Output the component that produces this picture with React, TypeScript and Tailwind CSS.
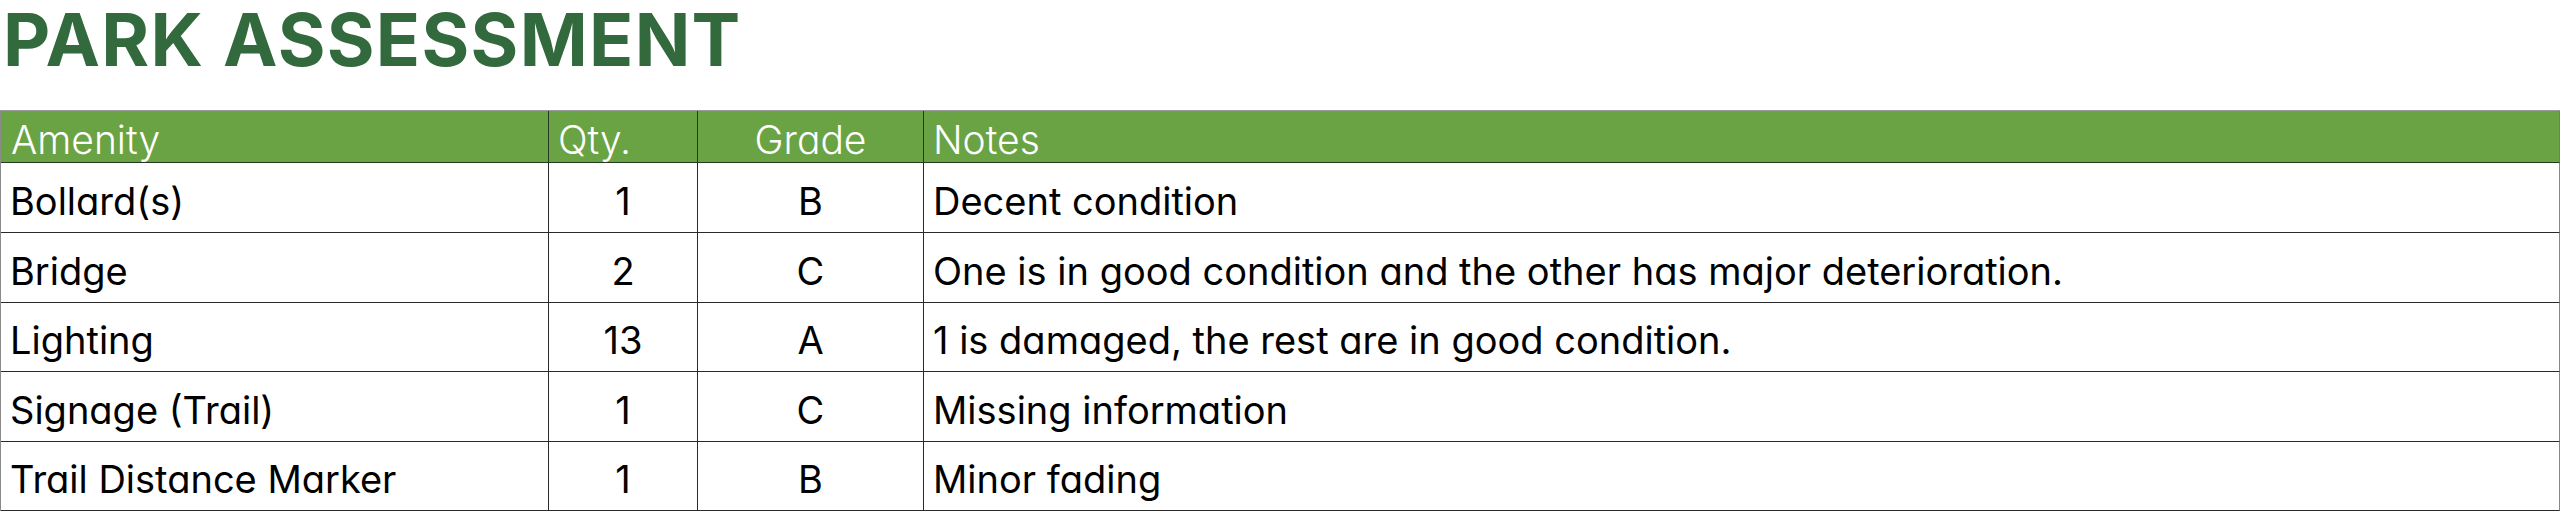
import React from "react";

const rows = [
  { amenity: "Bollard(s)", qty: "1", grade: "B", notes: "Decent condition", h: "h-[70px]" },
  { amenity: "Bridge", qty: "2", grade: "C", notes: "One is in good condition and the other has major deterioration.", h: "h-[70px]" },
  { amenity: "Lighting", qty: "13", grade: "A", notes: "1 is damaged, the rest are in good condition.", h: "h-[69px]" },
  { amenity: "Signage (Trail)", qty: "1", grade: "C", notes: "Missing information", h: "h-[70px]" },
  { amenity: "Trail Distance Marker", qty: "1", grade: "B", notes: "Minor fading", h: "h-[69px]" },
];

const font = "font-['Inter','Liberation_Sans',sans-serif] [font-feature-settings:'cv11']";

export default function App() {
  return (
    <div className={`w-[2560px] h-[511px] overflow-hidden bg-white ${font}`}>
      <div className="h-[110px] pl-[3px] pt-[2px] flex flex-col">
        <h1 className="text-[73px] leading-[76px] font-bold text-[#336a3d] tracking-[1.3px]">PARK ASSESSMENT</h1>
      </div>
      <div className="border-t border-l border-t-[#9a9a9a] border-l-[#8a8a8a]">
        <div className="grid grid-cols-[548px_149px_226px_1636px] h-[52px] bg-[#6aa344] text-white font-light text-[39px] leading-none">
          <div className="flex items-center pt-[5px] pl-[10px] border-r border-b border-[#253a22]">Amenity</div>
          <div className="flex items-center pt-[5px] pl-[9px] border-r border-b border-[#253a22]">Qty.</div>
          <div className="flex items-center justify-center pt-[5px] border-r border-b border-[#253a22]">Grade</div>
          <div className="flex items-center pt-[5px] pl-[9px] border-r border-b border-[#253a22] border-r-[#777]">Notes</div>
        </div>
        {rows.map((r, i) => (
          <div key={i} className={`grid grid-cols-[548px_149px_226px_1636px] ${r.h} text-black text-[38px] leading-none`}>
            <div className="flex items-center pt-[6px] pl-[9px] border-r border-b border-[#2a2a2a]">{r.amenity}</div>
            <div className="flex items-center justify-center pt-[6px] border-r border-b border-[#2a2a2a]">{r.qty}</div>
            <div className="flex items-center justify-center pt-[6px] border-r border-b border-[#2a2a2a]">{r.grade}</div>
            <div className="flex items-center pt-[6px] pl-[9px] border-r border-b border-[#2a2a2a] border-r-[#888]">{r.notes}</div>
          </div>
        ))}
      </div>
    </div>
  );
}
